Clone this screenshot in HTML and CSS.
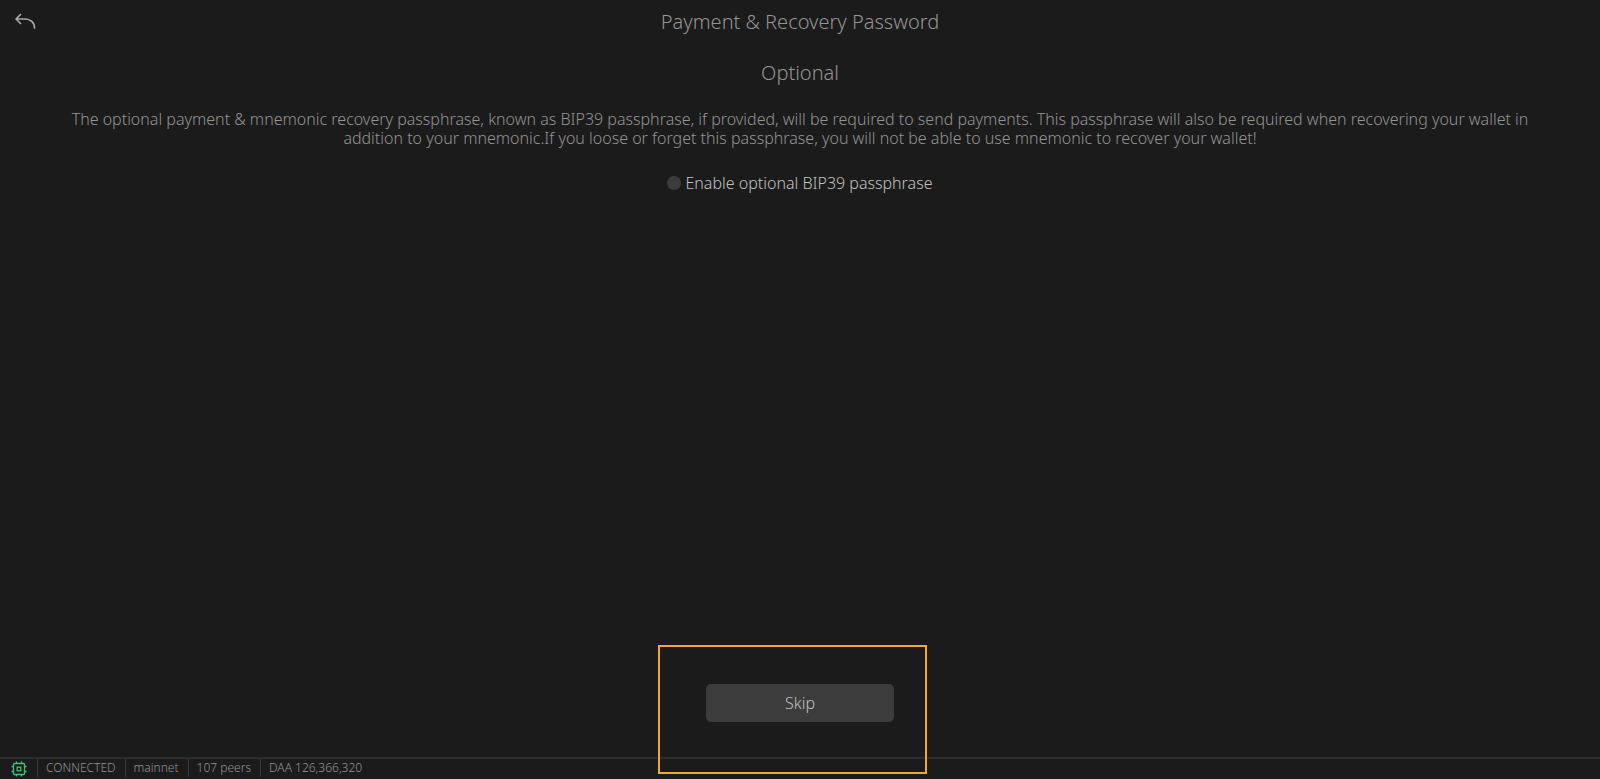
FILE: index.html
```html
<!DOCTYPE html>
<html lang="en">
<head>
<meta charset="utf-8">
<meta name="viewport" content="width=device-width, initial-scale=1">
<title>Payment &amp; Recovery Password</title>
<link rel="stylesheet" href="styles.css">
</head>
<body>
<header class="topbar">
  <button class="back" type="button" aria-label="Back">
    <svg width="22" height="18" viewBox="0 0 22 18" fill="none" stroke="currentColor" stroke-width="1.7" stroke-linecap="round" stroke-linejoin="round"><path d="M6.500 1.500 2 6 6.500 10.500M2 6H11C16.500 6 20.500 9.500 20.500 15"/></svg>
  </button>
  <h1 class="title">Payment &amp; Recovery Password</h1>
</header>
<main class="content">
  <h2 class="subtitle">Optional</h2>
  <p class="info">The optional payment &amp; mnemonic recovery passphrase, known as BIP39 passphrase, if provided, will be required to send payments. This passphrase will also be required when recovering your wallet in addition to your mnemonic.If you loose or forget this passphrase, you will not be able to use mnemonic to recover your wallet!</p>
  <label class="option"><input class="option-box" type="checkbox"><span>Enable optional BIP39 passphrase</span></label>
</main>
<div class="actions">
  <button class="skip" type="button">Skip</button>
  <div class="highlight"></div>
</div>
<footer class="status">
  <span class="cell cell-icon">
    <svg width="16" height="16" viewBox="0 0 16 16" fill="none" stroke="currentColor" stroke-width="1.3"><rect x="2.500" y="2.500" width="11" height="11" rx="1"/><rect x="6.200" y="6.200" width="3.600" height="3.600"/><path d="M5.500 2.500V.5M10.500 2.500V.5M5.500 15.500v-2M10.500 15.500v-2M2.500 5.500h-2M2.500 10.500h-2M15.500 5.500h-2M15.500 10.500h-2"/></svg>
  </span>
  <span class="cell">CONNECTED</span>
  <span class="cell">mainnet</span>
  <span class="cell">107 peers</span>
  <span class="cell">DAA 126,366,320</span>
</footer>
</body>
</html>
```
FILE: styles.css
```css
* { box-sizing: border-box; }
body {
  margin: 0;
  min-height: 100vh;
  display: flex;
  flex-direction: column;
  background: #1b1b1b;
  color: #949494;
  font-family: "Noto Sans", "Open Sans", sans-serif;
  font-size: 16px;
  font-weight: 300;
}
.topbar {
  display: grid;
  grid-template-columns: 50px 1fr 50px;
  align-items: center;
  height: 44px;
}
.back {
  display: flex;
  justify-content: center;
  padding: 0;
  border: 0;
  background: none;
  color: #a8a8a8;
}
.title, .subtitle {
  margin: 0;
  font-size: 20px;
  font-weight: 300;
  line-height: 24px;
  text-align: center;
}
.content {
  flex: 1;
  display: flex;
  flex-direction: column;
  align-items: center;
  padding: 17px 50px 0;
}
.info {
  margin: 25px 0 0;
  line-height: 19px;
  text-align: center;
}
.option {
  display: flex;
  align-items: center;
  gap: 4px;
  margin-top: 24px;
  line-height: 22px;
  color: #c0c0c0;
}
.option-box {
  appearance: none;
  width: 14px;
  height: 14px;
  margin: 0;
  border-radius: 50%;
  background: #3c3c3c;
}
.option-box:checked { background: #49ea90; }
.actions {
  position: relative;
  display: flex;
  justify-content: center;
  padding: 39px 0 35px;
}
.skip {
  width: 188px;
  height: 38px;
  border: 0;
  border-radius: 5px;
  background: #3c3c3c;
  color: #c0c0c0;
  font: inherit;
}
.highlight {
  position: absolute;
  top: 0;
  bottom: -17px;
  left: calc(50% - 142px);
  width: 269px;
  border: 2px solid #f0ab2e;
  pointer-events: none;
}
.status {
  display: flex;
  align-items: flex-start;
  height: 22px;
  border-top: 2px solid #2d2d2d;
  font-size: 12px;
  line-height: 18px;
}
.cell {
  padding: 0 9px 0 8px;
  border-left: 1px solid #3a3a3a;
}
.cell-icon {
  display: flex;
  align-items: center;
  height: 20px;
  padding: 0 10px 0 11px;
  border-left: 0;
  color: #3fc374;
}
```
